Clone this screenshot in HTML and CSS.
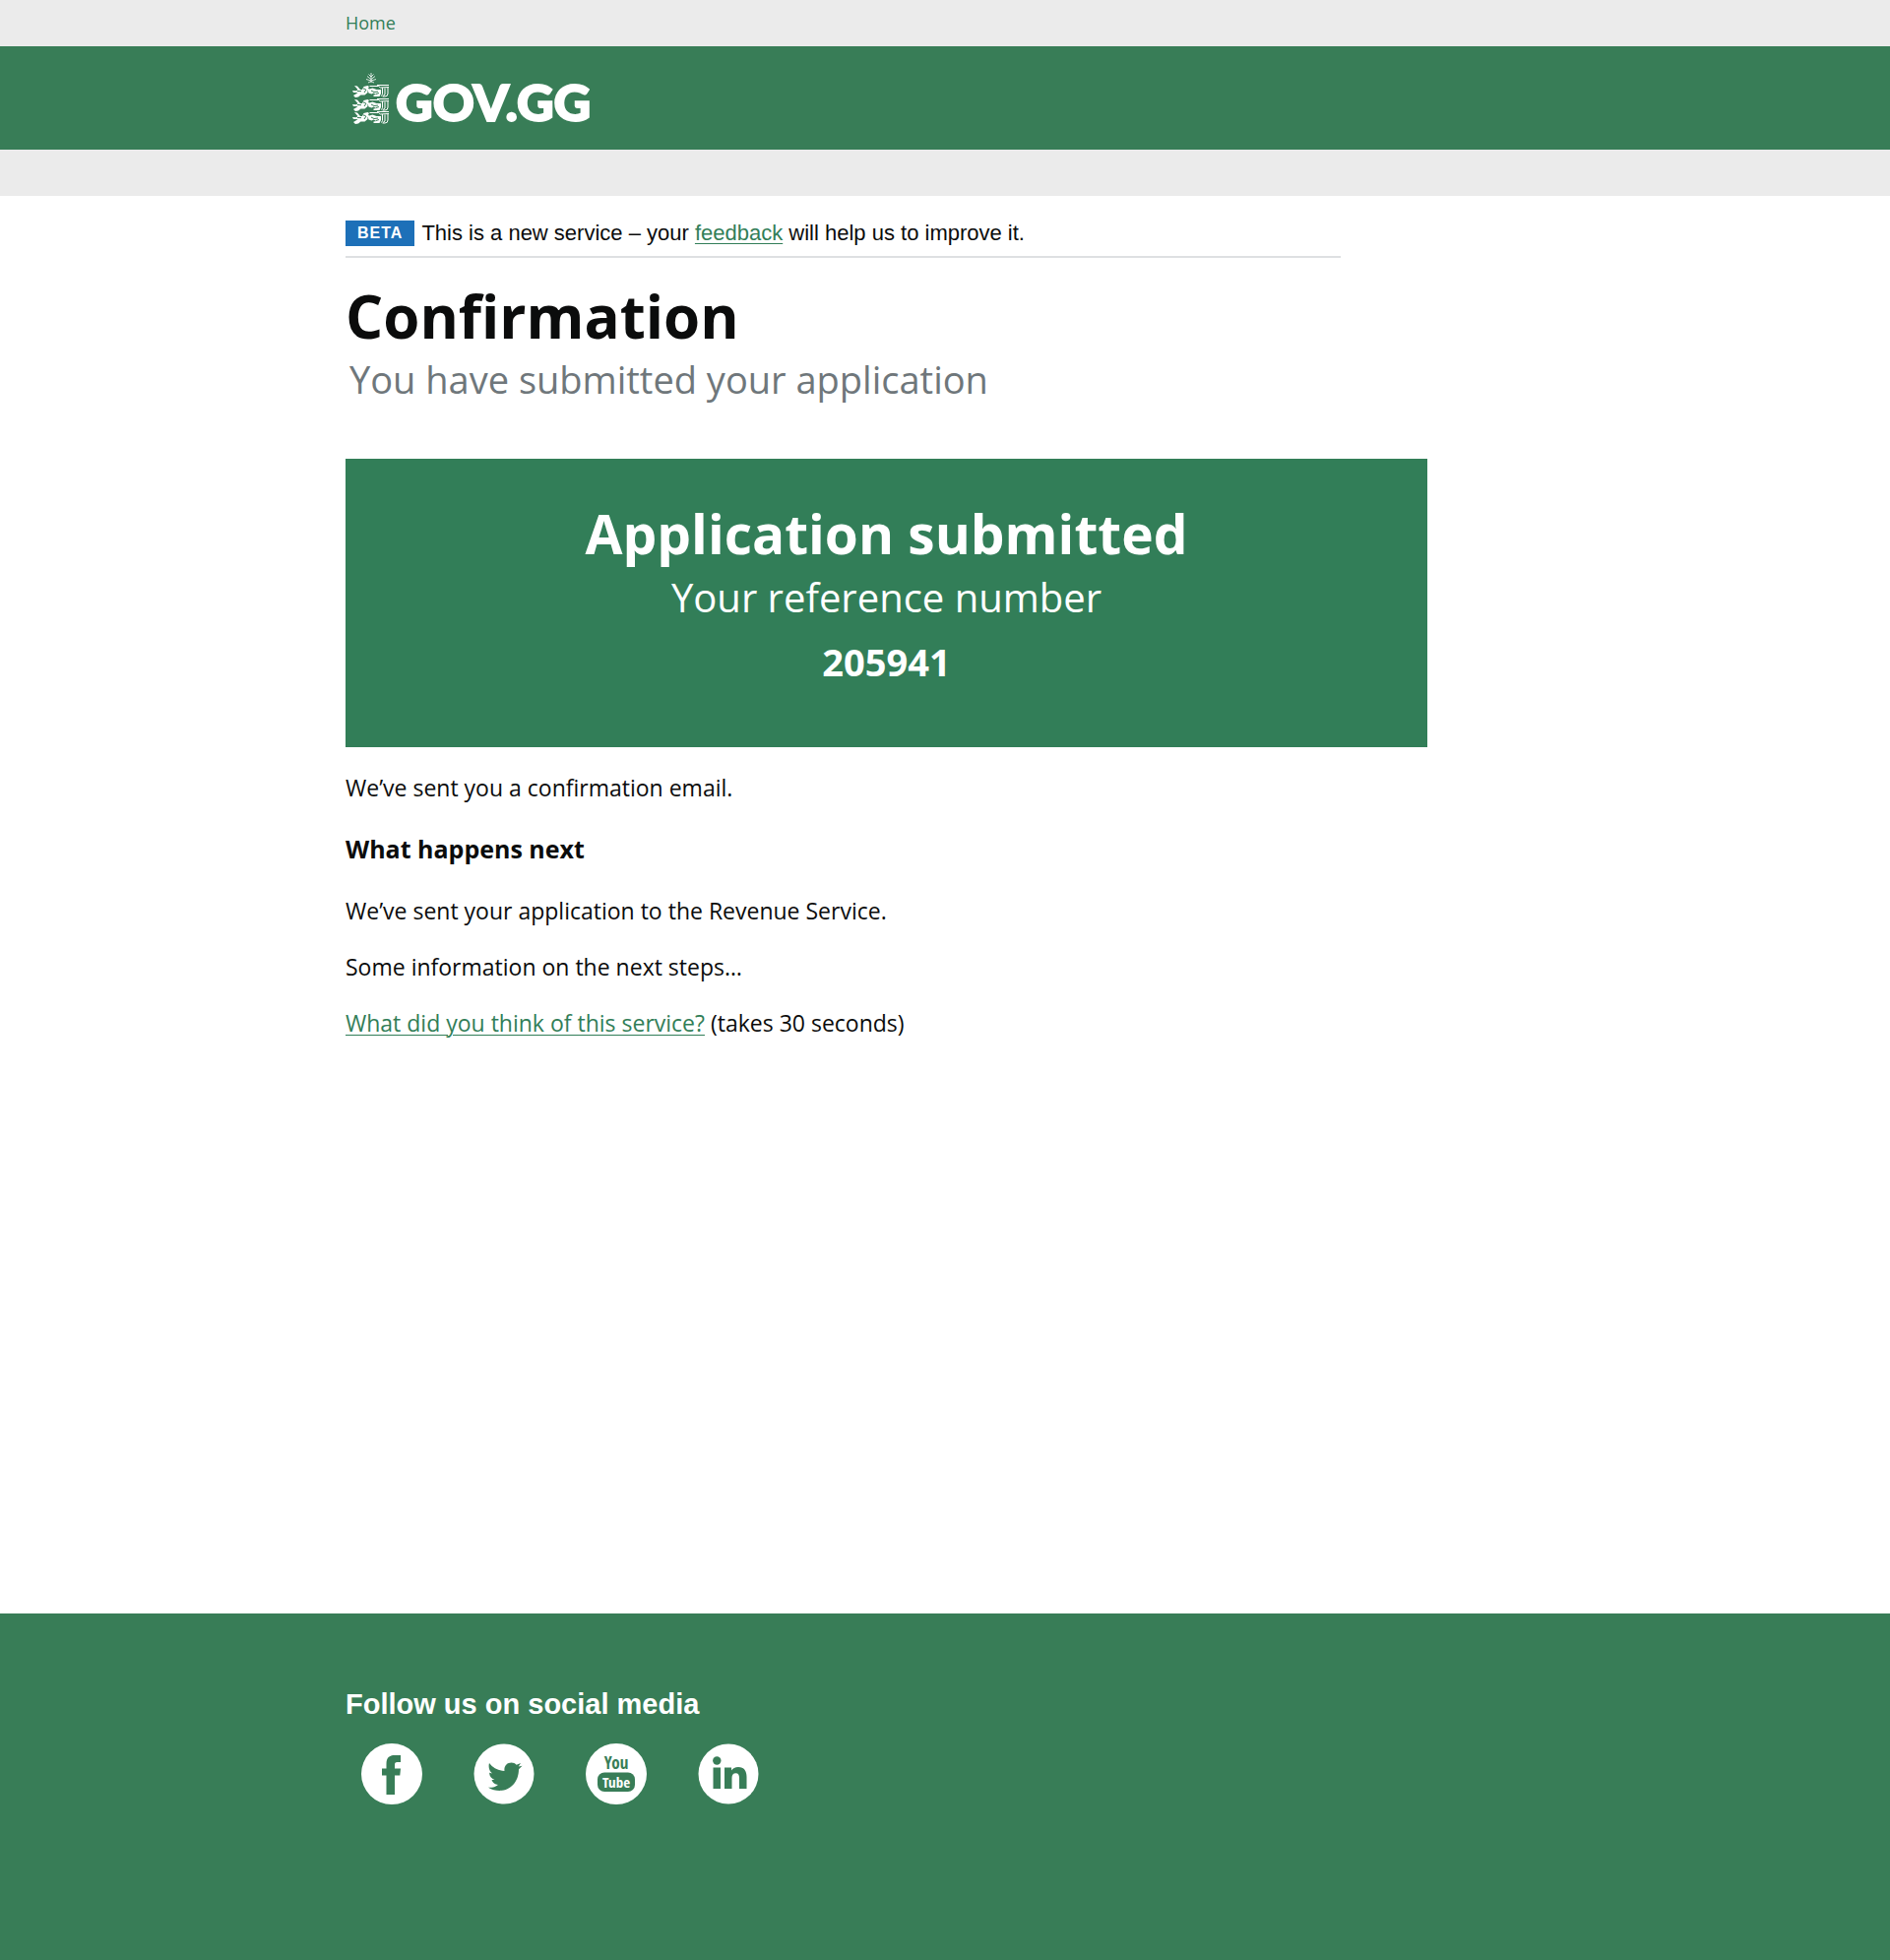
FILE: index.html
```html
<!DOCTYPE html>
<html lang="en">
<head>
<meta charset="utf-8">
<meta name="viewport" content="width=device-width, initial-scale=1">
<title>Confirmation - GOV.GG</title>
<link rel="stylesheet" href="styles.css">
</head>
<body>
<nav class="top-bar" aria-label="Breadcrumb">
  <div class="container"><a class="top-link" href="#">Home</a></div>
</nav>
<header class="header">
  <div class="container">
    <a class="brand" href="#">
      <svg class="crest" viewBox="0 0 40 54" aria-hidden="true">
        <defs>
          <g id="lion">
            <path d="M2 1l3 .5 3 3.500 2 0 1.500-3 4-1 1.500 1-1 1.500 1 1-1.500 1.500v2l-3 2.500-4 0-2.500 2-3 .5L1 11l2.500-1.500 2-1.500L1 8 0 6l4 .2L5.500 5z"/>
            <path d="M15.500 5l5-1.500 4 1.500 4.500 0v4l-1.500 3h-6l0-1.500 3-.5-3-1.500-2 1-3-1z"/>
            <path class="crest-line" d="M17.500 1.500h9l2 1.500 8.500-.5M25 .5h12M30.500 3v6.500l-1 2M33 3.500v6.500l-2 1.500M36 3v6q0 3-3 3h-2.500"/>
            <path class="crest-gap" d="M5 6.500l4 .2M11 4l2.500.5M12 8l2-3M19 6l3 1.500 4-.5M24 9.500l3-1"/>
          </g>
        </defs>
        <path class="crest-leaf" d="M19 0v10M19 4l-2.500-2.500M19 4l2.500-2.500M19 6.500l-4-3M19 6.500l4-3M19 8l-5-1.500M19 8l5-1.500M19 8.500l-3 1.500M19 8.500l3 1.500"/>
        <use href="#lion" y="12"/>
        <use href="#lion" y="26"/>
        <use href="#lion" y="39"/>
      </svg>
      <span class="brand-name">GOV.GG</span>
    </a>
  </div>
</header>
<div class="sub-bar"></div>

<main class="main container">
  <div class="phase">
    <strong class="phase-tag">BETA</strong>
    <span>This is a new service – your <a href="#">feedback</a> will help us to improve it.</span>
  </div>
  <h1 class="title">Confirmation</h1>
  <p class="subtitle">You have submitted your application</p>

  <section class="panel">
    <h2 class="panel-title">Application submitted</h2>
    <p class="panel-label">Your reference number</p>
    <p class="panel-number">205941</p>
  </section>

  <div class="copy">
    <p>We’ve sent you a confirmation email.</p>
    <h2>What happens next</h2>
    <p>We’ve sent your application to the Revenue Service.</p>
    <p>Some information on the next steps…</p>
    <p><a href="#">What did you think of this service?</a> (takes 30 seconds)</p>
  </div>
</main>

<footer class="footer">
  <div class="container">
    <h2 class="footer-title">Follow us on social media</h2>
    <ul class="social">
      <li><a href="#" aria-label="Facebook">
        <svg viewBox="0 0 62 62"><circle cx="31" cy="31" r="31"/><path class="mark" d="M25.500 52V32.500H21V25.500h4.500V21c0-6.500 3-9 8.500-9h6v7h-3.500c-2 0-2.500 1-2.500 2.500v4h6l-.7 7H34V52z"/></svg>
      </a></li>
      <li><a href="#" aria-label="Twitter">
        <svg viewBox="0 0 62 62"><circle cx="31" cy="31" r="30.500"/><path class="mark" d="M16 20c4 5 9 7.500 15.500 8-.8-5 2.500-8.500 7-8.500 2 0 3.800.8 5.200 2.200l4.300-1.700-2.300 3.500 3.800-.8-3.500 3.600C46 39 37.500 48 26.500 48c-4 0-8-1-11.500-3.200 4 .3 7.500-.8 10-2.900-3.200-.2-5.600-2-6.500-4.900h3c-3.400-1.200-5.300-3.600-5.400-7.200l3 .8c-3.100-2.500-4.200-6.500-3.100-10.600z"/></svg>
      </a></li>
      <li><a href="#" aria-label="YouTube">
        <svg viewBox="0 0 62 62"><circle cx="31" cy="31" r="31"/><rect class="mark" x="12" y="29.500" width="38" height="19.500" rx="7"/><text class="mark logo-text logo-text-large" x="31" y="26">You</text><text class="logo-text" x="31" y="45">Tube</text></svg>
      </a></li>
      <li><a href="#" aria-label="LinkedIn">
        <svg viewBox="0 0 62 62"><circle cx="31" cy="31" r="30.500"/><path class="mark" d="M15.500 24.500H23V46h-7.500zM27 24.500h7v3c1.500-2.200 3.700-3.500 7-3.500 6 0 8.500 4 8.500 10v12H42V35c0-3-1-4.800-3.500-4.800-2.700 0-4 1.800-4 4.800v11H27z"/><circle class="mark" cx="19.300" cy="17.500" r="4.200"/></svg>
      </a></li>
    </ul>
  </div>
</footer>
</body>
</html>
```
FILE: styles.css
```css
* { box-sizing: border-box; }

body {
  margin: 0;
  min-height: 100vh;
  display: flex;
  flex-direction: column;
  background: #fff;
  color: #0b0c0c;
  font-family: "Open Sans", "Noto Sans", sans-serif;
  font-size: 23px;
  line-height: 32px;
}

h1, h2, p, ul { margin: 0; padding: 0; }

a { color: #327e58; text-decoration-thickness: 1px; text-underline-offset: 3px; }

.container { width: 100%; max-width: 1218px; margin: 0 auto; }

.top-bar { background: #ebebeb; padding: 11px 0 12px; font-size: 18px; line-height: 24px; }
.top-link { display: block; width: max-content; text-decoration: none; }

.header { background: #387d57; padding: 24px 0 21px; }
.brand {
  display: flex;
  align-items: center;
  gap: 4px;
  width: max-content;
  height: 60px;
  padding-left: 7px;
  color: #fff;
  text-decoration: none;
}
.crest { width: 40px; height: 54px; fill: #fff; }
.crest-gap { fill: none; stroke: #387d57; stroke-width: 1; }
.crest-line { fill: none; stroke: #fff; stroke-width: 1; }
.crest-leaf { fill: none; stroke: #fff; stroke-width: 1; opacity: .8; }
.brand-name {
  padding-top: 3px;
  font-family: Lato, sans-serif;
  font-weight: 900;
  font-size: 52px;
  line-height: 60px;
  -webkit-text-stroke: 2px #fff;
}

.sub-bar { background: #ebebeb; height: 47px; }

.main { flex: 1; padding-top: 24px; padding-bottom: 48px; }

.phase {
  display: flex;
  align-items: center;
  gap: 7px;
  max-width: 1011px;
  padding-bottom: 9px;
  border-bottom: 2px solid #dee0e2;
  font-family: "Liberation Sans", Arial, sans-serif;
  font-size: 22px;
  line-height: 28px;
}
.phase-tag {
  background: #1d70b8;
  color: #fff;
  padding: 0 12px;
  font-size: 16px;
  line-height: 26px;
  letter-spacing: 1px;
}

.title { margin-top: 19px; font-size: 60px; line-height: 80px; }
.subtitle { padding-left: 4px; font-size: 38px; line-height: 48px; color: #6f777b; }

.panel {
  max-width: 1099px;
  margin-top: 57px;
  padding: 40px 24px 59px;
  background: #327e58;
  color: #fff;
  text-align: center;
}
.panel-title { font-size: 55px; line-height: 72px; }
.panel-label { margin-top: 1px; font-size: 40px; line-height: 56px; }
.panel-number { margin-top: 9px; font-size: 38px; line-height: 56px; font-weight: 700; }

.copy { display: flex; flex-direction: column; gap: 25px; margin-top: 25px; }
.copy h2 { margin: 5px 0 6px; font-size: 25px; line-height: 32px; }

.footer { background: #387d57; color: #fff; padding: 74px 0 158px; }
.footer-title { font-family: "Liberation Sans", Arial, sans-serif; font-size: 29px; line-height: 36px; }
.social { display: flex; gap: 52px; margin-top: 22px; padding-left: 16px; list-style: none; }
.social a, .social svg { display: block; width: 62px; height: 62px; }
.social svg { fill: #fff; }
.social .mark { fill: #387d57; }
.logo-text { font-family: "Open Sans Condensed", "Roboto Condensed", Roboto, sans-serif; font-size: 15px; font-weight: 700; text-anchor: middle; }
.logo-text-large { font-size: 17px; }
```
